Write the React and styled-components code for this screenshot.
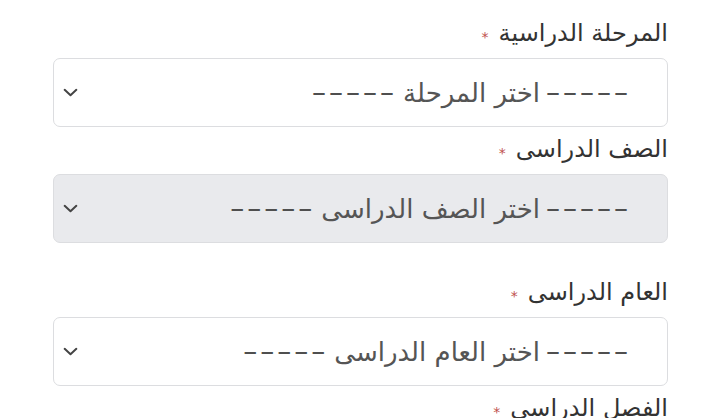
import styled, { createGlobalStyle } from "styled-components";

const GlobalStyle = createGlobalStyle`
  body {
    margin: 0;
    background: #ffffff;
    font-family: "DejaVu Sans", sans-serif;
    overflow: hidden;
  }
`;

const Form = styled.div`
  direction: rtl;
  padding: 15px 52px 0 53px;
  display: flex;
  flex-direction: column;
  gap: 4px;
`;

const Group = styled.div`
  display: flex;
  flex-direction: column;
  margin-top: ${(p) => (p.$spaced ? "27px" : "0")};
`;

const Label = styled.label`
  height: 36px;
  display: flex;
  align-items: center;
  gap: 10px;
  margin-bottom: 7px;
  font-size: 24px;
  color: #333333;
`;

const Star = styled.span`
  color: #c0504d;
  font-size: 14px;
  margin-top: 8px;
`;

const SelectBox = styled.div`
  height: 69px;
  box-sizing: border-box;
  border: 1px solid #dcdde0;
  border-radius: 7px;
  background: ${(p) => (p.$disabled ? "#e9eaed" : "#ffffff")};
  display: flex;
  align-items: center;
  gap: 6px;
  padding: 0 36px 0 8px;
  font-size: 26px;
  color: #555555;
`;

const Placeholder = styled.span`
  white-space: nowrap;
`;

const Dashes = styled.span`
  font-size: 28px;
  letter-spacing: 3px;
  color: #4f4f4f;
  white-space: nowrap;
`;

const Chevron = styled.svg`
  margin-right: auto;
  width: 17px;
  height: 17px;
  color: #444444;
`;

function Field({ label, placeholder, disabled, spaced }) {
  return (
    <Group $spaced={spaced}>
      <Label>
        {label}
        <Star>*</Star>
      </Label>
      <SelectBox $disabled={disabled}>
        <Dashes>–––––</Dashes>
        <Placeholder>{placeholder}</Placeholder>
        <Dashes>–––––</Dashes>
        <Chevron viewBox="0 0 16 16" fill="none">
          <path
            d="M2.5 5.5 8 10.5l5.5-5"
            stroke="currentColor"
            strokeWidth="1.9"
            strokeLinecap="round"
            strokeLinejoin="round"
          />
        </Chevron>
      </SelectBox>
    </Group>
  );
}

export default function App() {
  return (
    <>
      <GlobalStyle />
      <Form>
        <Field label="المرحلة الدراسية" placeholder="اختر المرحلة" />
        <Field label="الصف الدراسى" placeholder="اختر الصف الدراسى" disabled />
        <Field label="العام الدراسى" placeholder="اختر العام الدراسى" spaced />
        <Field label="الفصل الدراسى" placeholder="اختر الفصل الدراسى" />
      </Form>
    </>
  );
}
